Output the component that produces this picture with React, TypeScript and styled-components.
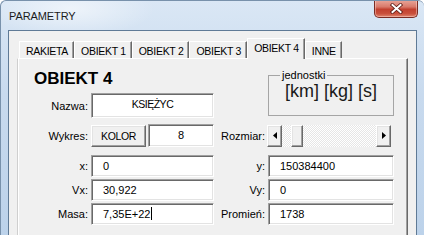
import React from "react";
import styled, { createGlobalStyle } from "styled-components";

const GlobalStyle = createGlobalStyle`
  html, body {
    margin: 0;
    padding: 0;
    overflow: hidden;
    background: #ffffff;
  }
  body {
    font-family: "Liberation Sans", Arial, sans-serif;
    font-size: 11px;
    color: #000;
  }
`;

const tabs = ["RAKIETA", "OBIEKT 1", "OBIEKT 2", "OBIEKT 3", "OBIEKT 4", "INNE"];

const App = () => {
  return (
    <>
      <GlobalStyle />
      <Window>
        <TitleBar>
          <Title>PARAMETRY</Title>
          <CloseButton aria-label="Zamknij">
            <svg width="13" height="11" viewBox="0 0 13 11">
              <path
                d="M2.5 2 L10.5 9 M10.5 2 L2.5 9"
                stroke="#5a1a14"
                strokeWidth="3.6"
                strokeLinecap="square"
              />
              <path
                d="M2.5 2 L10.5 9 M10.5 2 L2.5 9"
                stroke="#ffffff"
                strokeWidth="2"
                strokeLinecap="square"
              />
            </svg>
          </CloseButton>
        </TitleBar>

        <Client>
          <TabStrip>
            {tabs.map((t) => (
              <Tab key={t} $active={t === "OBIEKT 4"}>
                {t}
              </Tab>
            ))}
          </TabStrip>

          <Panel>
            <TopGrid>
              <Heading>OBIEKT 4</Heading>
              <Label style={{ gridRow: 2 }}>Nazwa:</Label>
              <NameBox>KSIĘŻYC</NameBox>
              <Units>
                <Legend>jednostki</Legend>
                <UnitsText>[km] [kg] [s]</UnitsText>
              </Units>
            </TopGrid>

            <FieldRow $gap={6} $height={23}>
              <Label>Wykres:</Label>
              <Pair>
                <PushButton>KOLOR</PushButton>
                <TextBox $center $height={23}>
                  8
                </TextBox>
              </Pair>
              <Label>Rozmiar:</Label>
              <ScrollBar>
                <ArrowButton>
                  <svg width="4" height="7" viewBox="0 0 4 7">
                    <polygon points="4,0 0,3.5 4,7" fill="#000" />
                  </svg>
                </ArrowButton>
                <Track>
                  <Thumb style={{ marginLeft: 9 }} />
                </Track>
                <ArrowButton>
                  <svg width="4" height="7" viewBox="0 0 4 7">
                    <polygon points="0,0 4,3.5 0,7" fill="#000" />
                  </svg>
                </ArrowButton>
              </ScrollBar>
            </FieldRow>

            <FieldRow $gap={8}>
              <Label>x:</Label>
              <TextBox>0</TextBox>
              <Label>y:</Label>
              <TextBox>150384400</TextBox>
            </FieldRow>

            <FieldRow $gap={2}>
              <Label>Vx:</Label>
              <TextBox>30,922</TextBox>
              <Label>Vy:</Label>
              <TextBox>0</TextBox>
            </FieldRow>

            <FieldRow $gap={2}>
              <Label>Masa:</Label>
              <TextBox>
                7,35E+22
                <Caret />
              </TextBox>
              <Label>Promień:</Label>
              <TextBox>1738</TextBox>
            </FieldRow>
          </Panel>
        </Client>
      </Window>
    </>
  );
};

export default App;

const Window = styled.div`
  width: 424px;
  height: 235px;
  display: flex;
  flex-direction: column;
  box-sizing: border-box;
  padding: 0 7px;
  border-radius: 6px 6px 0 0;
  border-top: 1px solid #7891ab;
  border-left: 1px solid #7891ab;
  background:
    radial-gradient(ellipse 120px 40px at 70px 8px, rgba(255, 255, 255, 0.55), rgba(255, 255, 255, 0) 70%),
    linear-gradient(180deg, #dae7f5 0%, #c8daee 40%, #bcd2ea 100%);
  overflow: hidden;
`;

const TitleBar = styled.div`
  height: 29px;
  display: flex;
  justify-content: space-between;
  align-items: flex-start;
  flex-shrink: 0;
`;

const Title = styled.div`
  align-self: center;
  margin-top: 1px;
  padding-left: 1px;
  font-size: 11px;
  color: #1b1b1b;
  letter-spacing: -0.1px;
`;

const CloseButton = styled.div`
  width: 44px;
  height: 18px;
  margin-right: -1px;
  margin-top: -1px;
  box-sizing: border-box;
  display: flex;
  align-items: center;
  justify-content: center;
  border: 1px solid #7a2c24;
  border-top: none;
  border-radius: 0 0 5px 5px;
  background: linear-gradient(
    180deg,
    #e9a79b 0%,
    #d97a6b 40%,
    #c2402f 55%,
    #c9503c 80%,
    #e0856f 100%
  );
  box-shadow: inset 0 0 0 1px rgba(255, 220, 210, 0.45);
`;

const Client = styled.div`
  flex: 1;
  display: flex;
  flex-direction: column;
  box-sizing: border-box;
  padding: 0 8px;
  background: #f0f0f0;
  border: 1px solid #5f7a96;
  border-bottom: none;
  min-height: 0;
`;

const TabStrip = styled.div`
  height: 27px;
  display: flex;
  align-items: flex-end;
  padding-left: 2px;
  flex-shrink: 0;
`;

const Tab = styled.div<{ $active?: boolean }>`
  position: relative;
  z-index: ${(p) => (p.$active ? 1 : 0)};
  height: ${(p) => (p.$active ? "21px" : "17px")};
  margin-bottom: ${(p) => (p.$active ? "-1px" : "0")};
  box-sizing: border-box;
  padding: 1px 5px 0 6px;
  line-height: 16px;
  font-size: 10.5px;
  letter-spacing: -0.3px;
  white-space: nowrap;
  background: #f0f0f0;
  border-top: 1px solid #ffffff;
  border-left: 1px solid #ffffff;
  border-right: 1px solid #696969;
  box-shadow: inset -1px 0 0 #a0a0a0;
`;

const Panel = styled.div`
  flex: 1;
  box-sizing: border-box;
  padding: 5px 0 0 1px;
  background: #f0f0f0;
  border-top: 1px solid #ffffff;
  border-left: 1px solid #cfcfcf;
  border-right: 1px solid #696969;
  box-shadow: inset 1px 0 0 #ffffff, inset -1px 0 0 #a0a0a0;
`;

const columns = "69px 123px 48px 126px";

const TopGrid = styled.div`
  display: grid;
  grid-template-columns: ${columns};
  grid-template-rows: 27px 25px;
  column-gap: 3px;
  row-gap: 2px;
`;

const Heading = styled.div`
  grid-column: 1 / 4;
  grid-row: 1;
  align-self: center;
  margin: 2px 0 0 15px;
  font-size: 17px;
  font-weight: bold;
  line-height: 17px;
  color: #000;
`;

const Label = styled.div`
  text-align: right;
  align-self: center;
  font-size: 11px;
  white-space: nowrap;
`;

const TextBox = styled.div<{ $center?: boolean; $height?: number }>`
  height: ${(p) => p.$height ?? 22}px;
  box-sizing: border-box;
  display: flex;
  align-items: center;
  justify-content: ${(p) => (p.$center ? "center" : "flex-start")};
  padding-left: ${(p) => (p.$center ? 0 : 11)}px;
  padding-bottom: 1px;
  background: #ffffff;
  border: 1px solid;
  border-color: #a0a0a0 #ffffff #ffffff #a0a0a0;
  box-shadow: inset 1px 1px 0 #696969, inset -1px -1px 0 #e3e3e3;
  font-size: 11px;
  white-space: nowrap;
`;

const NameBox = styled(TextBox)`
  grid-column: 2;
  grid-row: 2;
  height: 25px;
  justify-content: center;
  padding: 0 0 3px 0;
  font-size: 10.5px;
  letter-spacing: -0.5px;
`;

const Units = styled.fieldset`
  grid-column: 4;
  grid-row: 1 / 3;
  align-self: start;
  margin: 5px 0 0 0;
  padding: 0;
  height: 47px;
  box-sizing: border-box;
  min-width: 0;
  border: 1px solid #a5a5a5;
  text-align: center;
`;

const Legend = styled.legend`
  margin-left: 11px;
  padding: 0 2px;
  font-size: 11px;
  line-height: 13px;
  text-align: left;
`;

const UnitsText = styled.div`
  margin-top: -1px;
  font-size: 18px;
  line-height: 20px;
  color: #1a1a1a;
`;

const FieldRow = styled.div<{ $gap: number; $height?: number }>`
  display: grid;
  grid-template-columns: ${columns};
  column-gap: 3px;
  align-items: center;
  height: ${(p) => p.$height ?? 22}px;
  margin-top: ${(p) => p.$gap}px;
`;

const Pair = styled.div`
  display: flex;
  align-items: flex-start;
  gap: 2px;
  height: 23px;

  & > ${TextBox} {
    flex: 1;
  }
`;

const raised = `
  background: #f0f0f0;
  border: 1px solid;
  border-color: #ffffff #696969 #696969 #ffffff;
  box-shadow: inset -1px -1px 0 #a0a0a0, inset 1px 1px 0 #e3e3e3;
  box-sizing: border-box;
`;

const PushButton = styled.div`
  ${raised}
  width: 55px;
  height: 22px;
  margin-top: 1px;
  display: flex;
  align-items: center;
  justify-content: center;
  font-size: 10.5px;
  letter-spacing: -0.4px;
`;

const ScrollBar = styled.div`
  display: flex;
  height: 22px;
  width: 124px;
  margin-left: -1px;
`;

const ArrowButton = styled.div`
  ${raised}
  width: 15px;
  display: flex;
  align-items: center;
  justify-content: center;
  flex-shrink: 0;
`;

const Track = styled.div`
  flex: 1;
  display: flex;
  background: repeating-conic-gradient(#ffffff 0 25%, #e6e6e6 0 50%) 0 0 / 2px 2px;
`;

const Thumb = styled.div`
  ${raised}
  width: 12px;
`;

const Caret = styled.span`
  display: inline-block;
  width: 1px;
  height: 13px;
  margin-left: 1px;
  background: #000;
`;
